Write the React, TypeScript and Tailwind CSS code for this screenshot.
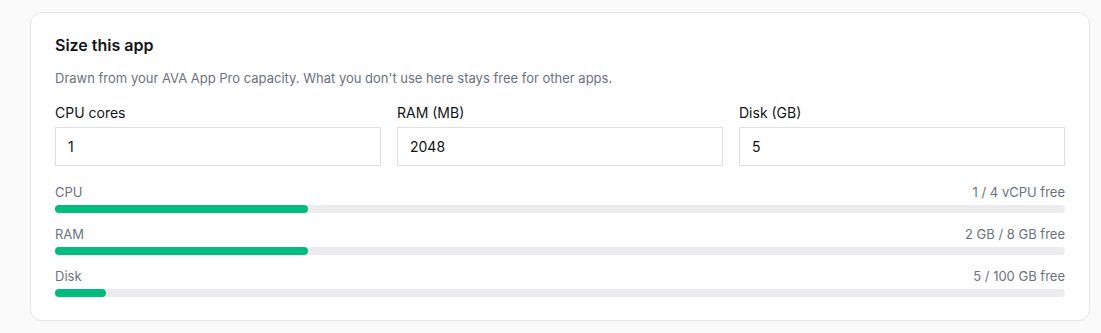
const FIELDS = [
  { label: 'CPU cores', value: '1' },
  { label: 'RAM (MB)', value: '2048' },
  { label: 'Disk (GB)', value: '5' },
];

const USAGE = [
  { label: 'CPU', free: '1 / 4 vCPU free', pct: 25 },
  { label: 'RAM', free: '2 GB / 8 GB free', pct: 25 },
  { label: 'Disk', free: '5 / 100 GB free', pct: 5 },
];

export default function App() {
  return (
    <div className="min-h-[333px] bg-[#fafafa] pl-[30px] pr-[11px] pt-[12px] font-['Inter',sans-serif]">
      <div className="rounded-xl border border-[#e6e7ea] bg-white px-6 pt-5 pb-[23px] shadow-[0_1px_2px_rgba(0,0,0,0.03)]">
        <h2 className="text-base leading-6 font-semibold text-[#111418]">Size this app</h2>
        <p className="mt-[11px] text-[13px] leading-5 text-[#6b7280]">
          Drawn from your AVA App Pro capacity. What you don't use here stays free for other apps.
        </p>

        <div className="mt-[15px] grid grid-cols-3 gap-4">
          {FIELDS.map((f) => (
            <label key={f.label} className="flex flex-col">
              <span className="text-sm leading-5 font-normal text-[#111418]">{f.label}</span>
              <input
                defaultValue={f.value}
                className="mt-1 h-[39px] border border-[#dcdfe3] bg-white px-3 text-sm text-[#111418] outline-none"
              />
            </label>
          ))}
        </div>

        <div className="mt-4 flex flex-col gap-[11px]">
          {USAGE.map((u) => (
            <div key={u.label}>
              <div className="flex items-center justify-between text-[13px] leading-5 text-[#6b7280]">
                <span>{u.label}</span>
                <span>{u.free}</span>
              </div>
              <div className="mt-[3px] h-2 rounded-full bg-[#ececee]">
                <div className="h-2 rounded-full bg-emerald-500" style={{ width: `${u.pct}%` }} />
              </div>
            </div>
          ))}
        </div>
      </div>
    </div>
  );
}
